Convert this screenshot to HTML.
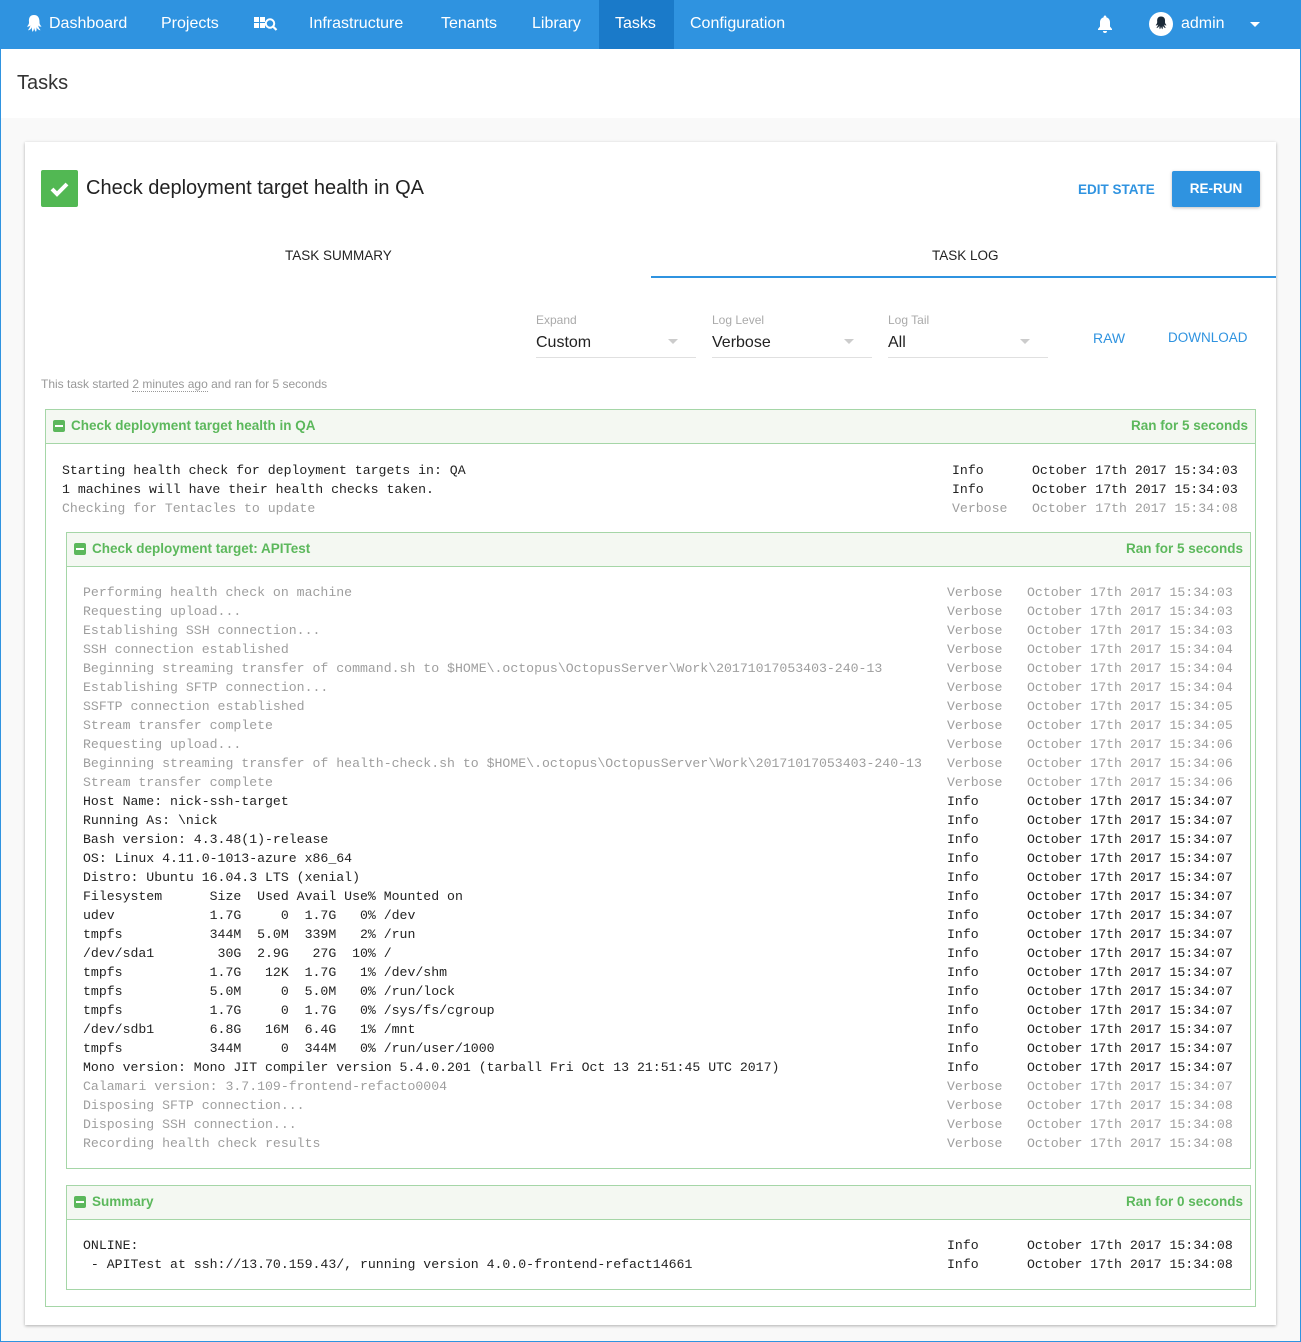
<!DOCTYPE html>
<html><head><meta charset="utf-8"><style>
*{box-sizing:border-box;margin:0;padding:0}
html,body{width:1301px;height:1342px;overflow:hidden}
body{background:#f9f9f9;font-family:"Liberation Sans",sans-serif;position:relative}
.frame{position:absolute;left:0;top:0;width:1301px;height:1342px;border:1px solid #2f93e0;border-top:none;pointer-events:none;z-index:5}
.nav{position:absolute;left:0;top:0;width:1301px;height:49px;background:#2f93e0;color:#fff;font-size:16px}
.nav span{position:absolute;top:15px;white-space:nowrap}
.nav .act{position:absolute;left:599px;top:0;width:75px;height:49px;background:#1a7ac9}
.hdr{position:absolute;left:0;top:49px;width:1301px;height:69px;background:#fff}
.hdr h1{position:absolute;left:17px;top:23px;font-size:20px;font-weight:normal;color:#333}
.card{position:absolute;left:25px;top:142px;width:1251px;height:1183px;background:#fff;box-shadow:0 1px 3px rgba(0,0,0,.3)}
.abs{position:absolute;white-space:nowrap}
.sec{position:absolute;border:1px solid #a5d6a7;background:#fff}
.sh{height:34px;background:#f4f8f2;border-bottom:1px solid #a5d6a7;color:#5cb85c;font-weight:bold;font-size:13.5px;position:relative}
.sh .ic{position:absolute;left:7px;top:10px;width:12px;height:12px;background:#5cb85c;border-radius:2px}
.sh .ic:after{content:"";position:absolute;left:2px;top:5px;width:8px;height:2px;background:#fff}
.sh .t{position:absolute;left:25px;top:8px}
.sh .r{position:absolute;right:7px;top:8px}
.rows{padding:16px 16px 16px 16px}
.row{display:flex;height:19px;line-height:19px;font-family:"Liberation Mono",monospace;font-size:13.2px;color:#222;white-space:pre}
.row .m{flex:1;overflow:hidden}
.row .l{width:80px}
.row .d{width:207px}
.v{color:#9e9e9e}
.sel{position:absolute;width:160px;height:46px;border-bottom:1px solid #e0e0e0}
.sel .lb{position:absolute;top:1px;font-size:12px;color:#aaa}
.sel .vl{position:absolute;top:22px;font-size:16px;color:#222}
.sel .ar{position:absolute;right:18px;top:27px;border-left:5px solid transparent;border-right:5px solid transparent;border-top:5px solid #ccc}
.blue{color:#2f93e0;font-size:14px;font-weight:bold}
</style></head><body>
<div class="frame"></div>
<div class="nav">
<div class="act"></div>
<svg style="position:absolute;left:25px;top:14px" width="18" height="19" viewBox="0 0 18 19"><path fill="#fff" d="M9 1C5 1 3.5 4 4 8c.2 1.5-.5 3-2 4.5 1.5.5 3-.3 3.5-1.2-.5 2-1.5 3.5-2.5 5 1.5 0 3-1 4-3-.2 2 0 3.5.5 4.5 1-.5 1.5-2.5 1.5-4 .5 1.5 1 3.5 2 4 .5-1 .7-2.5.5-4.5 1 2 2.5 3 4 3-1-1.5-2-3-2.5-5 .5.9 2 1.7 3.5 1.2-1.5-1.5-2.2-3-2-4.5C14.5 4 13 1 9 1z"/></svg>
<span style="left:49px">Dashboard</span>
<span style="left:161px">Projects</span>
<svg style="position:absolute;left:254px;top:17px" width="24" height="16" viewBox="0 0 24 16"><rect x="0" y="0" width="5" height="5" fill="#fff"/><rect x="6" y="0" width="5" height="5" fill="#fff"/><rect x="0" y="6" width="5" height="5" fill="#fff"/><rect x="6" y="6" width="5" height="5" fill="#fff"/><circle cx="16" cy="6.5" r="4.2" fill="none" stroke="#fff" stroke-width="2"/><path d="M19 9.5l3.5 3.5" stroke="#fff" stroke-width="2.2"/></svg>
<span style="left:309px">Infrastructure</span>
<span style="left:441px">Tenants</span>
<span style="left:532px">Library</span>
<span style="left:615px">Tasks</span>
<span style="left:690px">Configuration</span>
<svg style="position:absolute;left:1096px;top:14px" width="18" height="20" viewBox="0 0 18 20"><path fill="#fff" d="M9 1.5c-.8 0-1.3.6-1.3 1.3v.5C5.3 4 4 6 4 8.5v4L2 15v1h14v-1l-2-2.5v-4C14 6 12.7 4 10.3 3.3v-.5C10.3 2.1 9.8 1.5 9 1.5zM7 17a2 2 0 0 0 4 0z"/></svg>
<svg style="position:absolute;left:1149px;top:12px" width="24" height="24" viewBox="0 0 24 24"><circle cx="12" cy="12" r="12" fill="#fff"/><path fill="#1b2a38" d="M12 4.5c-3 0-4.2 2.3-3.8 5.3.1 1.1-.4 2.3-1.5 3.400 1.1.4 2.2-.2 2.6-.9-.4 1.5-1.1 2.6-1.9 3.8 1.1 0 2.2-.8 3-2.3-.1 1.5 0 2.6.4 3.4.8-.4 1.1-1.9 1.1-3 .4 1.1.8 2.6 1.5 3 .4-.8.5-1.9.4-3.4.8 1.5 1.9 2.3 3 2.3-.8-1.2-1.5-2.3-1.9-3.8.4.7 1.5 1.3 2.6.9-1.1-1.1-1.600-2.3-1.5-3.4.4-3-.8-5.3-4-5.3z"/></svg>
<span style="left:1181px">admin</span>
<div style="position:absolute;left:1250px;top:22px;border-left:5px solid transparent;border-right:5px solid transparent;border-top:5px solid #fff"></div>
</div>
<div class="hdr"><h1>Tasks</h1></div>
<div class="card">
<div class="abs" style="left:16px;top:28px;width:37px;height:37px;background:#52b853;border-radius:2px"><svg width="37" height="37" viewBox="0 0 37 37"><path d="M11 19l5 5 10-10" fill="none" stroke="#fff" stroke-width="4"/></svg></div>
<div class="abs" style="left:61px;top:35px;font-size:20px;color:#222">Check deployment target health in QA</div>
<div class="abs blue" style="left:1053px;top:40px;font-size:13.5px">EDIT STATE</div>
<div class="abs" style="left:1147px;top:29px;width:88px;height:36px;background:#2f93e0;border-radius:2px;box-shadow:0 1px 3px rgba(0,0,0,.25);color:#fff;font-size:13.5px;font-weight:bold;text-align:center;line-height:36px">RE-RUN</div>
<div class="abs" style="left:260px;top:106px;font-size:13.5px;color:#222">TASK SUMMARY</div>
<div class="abs" style="left:907px;top:106px;font-size:13.5px;color:#222">TASK LOG</div>
<div class="abs" style="left:626px;top:134px;width:625px;height:2px;background:#2f93e0"></div>
<div class="sel" style="left:511px;top:170px"><div class="lb">Expand</div><div class="vl">Custom</div><div class="ar"></div></div>
<div class="sel" style="left:687px;top:170px"><div class="lb">Log Level</div><div class="vl">Verbose</div><div class="ar"></div></div>
<div class="sel" style="left:863px;top:170px"><div class="lb">Log Tail</div><div class="vl">All</div><div class="ar"></div></div>
<div class="abs blue" style="left:1068px;top:188px;font-weight:normal">RAW</div>
<div class="abs blue" style="left:1143px;top:188px;font-weight:normal;font-size:13.5px">DOWNLOAD</div>
<div class="abs" style="left:16px;top:235px;font-size:12px;color:#999">This task started <span style="border-bottom:1px dotted #999">2 minutes ago</span> and ran for 5 seconds</div>

<div class="sec" style="left:20px;top:267px;width:1211px;height:898px">
<div class="sh"><div class="ic"></div><div class="t">Check deployment target health in QA</div><div class="r">Ran for 5 seconds</div></div>
<div class="rows" style="padding-top:17px">
<div class="row"><span class="m">Starting health check for deployment targets in: QA</span><span class="l">Info</span><span class="d">October 17th 2017 15:34:03</span></div>
<div class="row"><span class="m">1 machines will have their health checks taken.</span><span class="l">Info</span><span class="d">October 17th 2017 15:34:03</span></div>
<div class="row v"><span class="m">Checking for Tentacles to update</span><span class="l">Verbose</span><span class="d">October 17th 2017 15:34:08</span></div>

<div class="sec" style="position:relative;left:4px;margin-top:14px;width:1185px;height:637px">
<div class="sh"><div class="ic"></div><div class="t">Check deployment target: APITest</div><div class="r">Ran for 5 seconds</div></div>
<div class="rows" style="padding-top:16px">
<div class="row v"><span class="m">Performing health check on machine</span><span class="l">Verbose</span><span class="d">October 17th 2017 15:34:03</span></div>
<div class="row v"><span class="m">Requesting upload...</span><span class="l">Verbose</span><span class="d">October 17th 2017 15:34:03</span></div>
<div class="row v"><span class="m">Establishing SSH connection...</span><span class="l">Verbose</span><span class="d">October 17th 2017 15:34:03</span></div>
<div class="row v"><span class="m">SSH connection established</span><span class="l">Verbose</span><span class="d">October 17th 2017 15:34:04</span></div>
<div class="row v"><span class="m">Beginning streaming transfer of command.sh to $HOME\.octopus\OctopusServer\Work\20171017053403-240-13</span><span class="l">Verbose</span><span class="d">October 17th 2017 15:34:04</span></div>
<div class="row v"><span class="m">Establishing SFTP connection...</span><span class="l">Verbose</span><span class="d">October 17th 2017 15:34:04</span></div>
<div class="row v"><span class="m">SSFTP connection established</span><span class="l">Verbose</span><span class="d">October 17th 2017 15:34:05</span></div>
<div class="row v"><span class="m">Stream transfer complete</span><span class="l">Verbose</span><span class="d">October 17th 2017 15:34:05</span></div>
<div class="row v"><span class="m">Requesting upload...</span><span class="l">Verbose</span><span class="d">October 17th 2017 15:34:06</span></div>
<div class="row v"><span class="m">Beginning streaming transfer of health-check.sh to $HOME\.octopus\OctopusServer\Work\20171017053403-240-13</span><span class="l">Verbose</span><span class="d">October 17th 2017 15:34:06</span></div>
<div class="row v"><span class="m">Stream transfer complete</span><span class="l">Verbose</span><span class="d">October 17th 2017 15:34:06</span></div>
<div class="row"><span class="m">Host Name: nick-ssh-target</span><span class="l">Info</span><span class="d">October 17th 2017 15:34:07</span></div>
<div class="row"><span class="m">Running As: \nick</span><span class="l">Info</span><span class="d">October 17th 2017 15:34:07</span></div>
<div class="row"><span class="m">Bash version: 4.3.48(1)-release</span><span class="l">Info</span><span class="d">October 17th 2017 15:34:07</span></div>
<div class="row"><span class="m">OS: Linux 4.11.0-1013-azure x86_64</span><span class="l">Info</span><span class="d">October 17th 2017 15:34:07</span></div>
<div class="row"><span class="m">Distro: Ubuntu 16.04.3 LTS (xenial)</span><span class="l">Info</span><span class="d">October 17th 2017 15:34:07</span></div>
<div class="row"><span class="m">Filesystem      Size  Used Avail Use% Mounted on</span><span class="l">Info</span><span class="d">October 17th 2017 15:34:07</span></div>
<div class="row"><span class="m">udev            1.7G     0  1.7G   0% /dev</span><span class="l">Info</span><span class="d">October 17th 2017 15:34:07</span></div>
<div class="row"><span class="m">tmpfs           344M  5.0M  339M   2% /run</span><span class="l">Info</span><span class="d">October 17th 2017 15:34:07</span></div>
<div class="row"><span class="m">/dev/sda1        30G  2.9G   27G  10% /</span><span class="l">Info</span><span class="d">October 17th 2017 15:34:07</span></div>
<div class="row"><span class="m">tmpfs           1.7G   12K  1.7G   1% /dev/shm</span><span class="l">Info</span><span class="d">October 17th 2017 15:34:07</span></div>
<div class="row"><span class="m">tmpfs           5.0M     0  5.0M   0% /run/lock</span><span class="l">Info</span><span class="d">October 17th 2017 15:34:07</span></div>
<div class="row"><span class="m">tmpfs           1.7G     0  1.7G   0% /sys/fs/cgroup</span><span class="l">Info</span><span class="d">October 17th 2017 15:34:07</span></div>
<div class="row"><span class="m">/dev/sdb1       6.8G   16M  6.4G   1% /mnt</span><span class="l">Info</span><span class="d">October 17th 2017 15:34:07</span></div>
<div class="row"><span class="m">tmpfs           344M     0  344M   0% /run/user/1000</span><span class="l">Info</span><span class="d">October 17th 2017 15:34:07</span></div>
<div class="row"><span class="m">Mono version: Mono JIT compiler version 5.4.0.201 (tarball Fri Oct 13 21:51:45 UTC 2017)</span><span class="l">Info</span><span class="d">October 17th 2017 15:34:07</span></div>
<div class="row v"><span class="m">Calamari version: 3.7.109-frontend-refacto0004</span><span class="l">Verbose</span><span class="d">October 17th 2017 15:34:07</span></div>
<div class="row v"><span class="m">Disposing SFTP connection...</span><span class="l">Verbose</span><span class="d">October 17th 2017 15:34:08</span></div>
<div class="row v"><span class="m">Disposing SSH connection...</span><span class="l">Verbose</span><span class="d">October 17th 2017 15:34:08</span></div>
<div class="row v"><span class="m">Recording health check results</span><span class="l">Verbose</span><span class="d">October 17th 2017 15:34:08</span></div>
</div></div>

<div class="sec" style="position:relative;left:4px;margin-top:16px;width:1185px;height:105px">
<div class="sh"><div class="ic"></div><div class="t">Summary</div><div class="r">Ran for 0 seconds</div></div>
<div class="rows" style="padding-top:16px">
<div class="row"><span class="m">ONLINE:</span><span class="l">Info</span><span class="d">October 17th 2017 15:34:08</span></div>
<div class="row"><span class="m"> - APITest at ssh://13.70.159.43/, running version 4.0.0-frontend-refact14661</span><span class="l">Info</span><span class="d">October 17th 2017 15:34:08</span></div>
</div></div>
</div></div>
</div>
</body></html>
